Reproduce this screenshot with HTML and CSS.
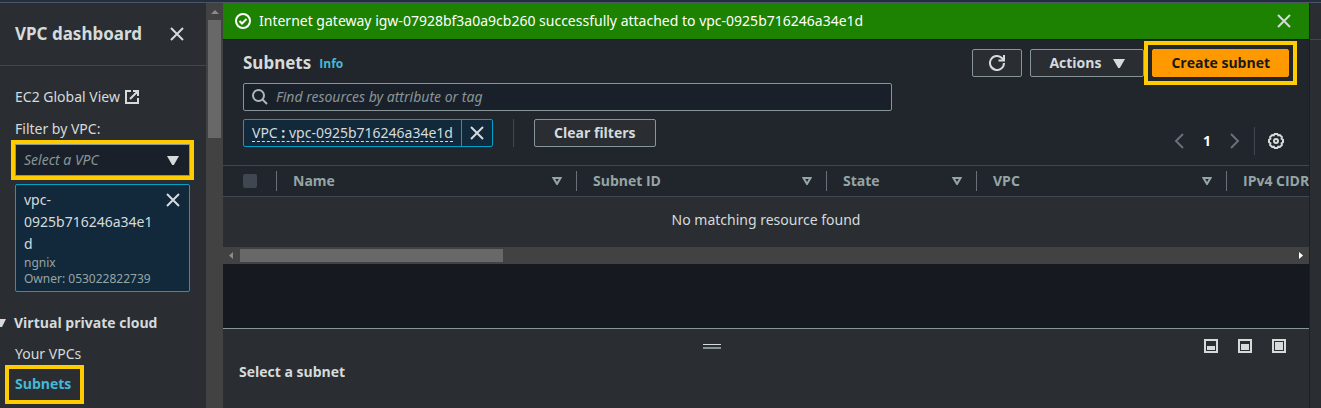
FILE: index.html
```html
<!DOCTYPE html>
<html lang="en">
<head>
<meta charset="utf-8">
<title>Subnets | VPC</title>
<link rel="stylesheet" href="styles.css">
</head>
<body>
<div class="topbar"></div>
<div class="layout">
  <aside class="sidebar">
    <div class="sidebar-body">
      <header class="sidebar-header">
        <h2 class="sidebar-title">VPC dashboard</h2>
        <button class="icon-btn" type="button" aria-label="Close navigation"><svg class="icon" viewBox="0 0 16 16"><path d="M2 2l12 12M14 2L2 14"/></svg></button>
      </header>
      <div class="sidebar-filter">
        <a class="nav-link external" href="#">EC2 Global View
          <svg class="icon" viewBox="0 0 16 16"><path d="M7 2H2v12h12V9M9 2h5v5M14 2L6 10"/></svg></a>
        <label class="filter-label" for="vpc-filter">Filter by VPC:</label>
        <div class="select highlight">
          <select id="vpc-filter" class="select-input"><option>Select a VPC</option></select>
          <svg class="caret" viewBox="0 0 12 10"><path d="M0 1h12L6.800 10h-1.600z"/></svg>
        </div>
        <div class="vpc-token">
          <div class="vpc-token-text">
            <span class="vpc-id">vpc-0925b716246a34e1d</span>
            <span class="vpc-meta">ngnix</span>
            <span class="vpc-meta">Owner: 053022822739</span>
          </div>
          <button class="icon-btn" type="button" aria-label="Remove VPC"><svg class="icon" viewBox="0 0 16 16"><path d="M2 2l12 12M14 2L2 14"/></svg></button>
        </div>
      </div>
      <nav class="nav">
        <button class="nav-group" type="button"><svg class="nav-caret" viewBox="0 0 6 8"><path d="M0 0h6L2 8H0z"/></svg>Virtual private cloud</button>
        <a class="nav-link nav-item" href="#">Your VPCs</a>
        <a class="nav-link nav-item current highlight" href="#" aria-current="page">Subnets</a>
      </nav>
    </div>
    <div class="vscroll">
      <svg class="vscroll-arrow" viewBox="0 0 17 17"><path d="M5 11h8L9 7z"/></svg>
      <div class="vscroll-thumb"></div>
    </div>
  </aside>

  <main class="main">
    <div class="flash" role="status">
      <svg class="flash-icon" viewBox="0 0 16 16"><circle cx="8" cy="8" r="7"/><path d="M4.500 8L7 10.500 11.500 6"/></svg>
      <span class="flash-text">Internet gateway igw-07928bf3a0a9cb260 successfully attached to vpc-0925b716246a34e1d</span>
      <button class="icon-btn" type="button" aria-label="Dismiss"><svg class="icon" viewBox="0 0 16 16"><path d="M2 2l12 12M14 2L2 14"/></svg></button>
    </div>

    <section class="card">
      <div class="card-header">
        <h1 class="card-title">Subnets</h1>
        <a class="info" href="#">Info</a>
        <div class="actions">
          <button class="btn btn-refresh" type="button" aria-label="Refresh"><svg class="refresh" viewBox="0 0 16 16"><path d="M15 8a7 7 0 1 1-2.200-5.100L15 5M15 0v5.500H9.500"/></svg></button>
          <button class="btn btn-menu" type="button">Actions <svg class="caret" viewBox="0 0 12 10"><path d="M0 1h12L6.800 10h-1.600z"/></svg></button>
          <div class="primary-slot"><button class="btn btn-primary" type="button">Create subnet</button></div>
        </div>
      </div>

      <div class="search">
        <svg class="search-icon" viewBox="0 0 16 16"><circle cx="6.500" cy="6.500" r="5.500"/><path d="M10.500 10.500L15 15"/></svg>
        <input class="search-input" type="text" aria-label="Find resources" placeholder="Find resources by attribute or tag">
      </div>

      <div class="filters">
        <div class="token">
          <button class="token-label" type="button"><span class="token-text">VPC <b>:</b> vpc-0925b716246a34e1d</span></button>
          <button class="token-remove" type="button" aria-label="Remove filter"><svg class="icon" viewBox="0 0 16 16"><path d="M2 2l12 12M14 2L2 14"/></svg></button>
        </div>
        <span class="divider"></span>
        <button class="btn" type="button">Clear filters</button>
        <div class="pager">
          <button class="page-btn" type="button" aria-label="Previous page"><svg class="chevron" viewBox="0 0 10 16"><path d="M9 1L2 8l7 7"/></svg></button>
          <button class="page-btn page-current" type="button">1</button>
          <button class="page-btn" type="button" aria-label="Next page"><svg class="chevron" viewBox="0 0 10 16"><path d="M1 1l7 7-7 7"/></svg></button>
          <span class="divider"></span>
          <button class="icon-btn prefs" type="button" aria-label="Preferences"><svg class="gear" viewBox="0 0 16 16"><path d="M6.700 1h2.600l.9 1.300 1.700-.3 2 2-.3 1.700 1.400 1v2.600l-1.400 1 .3 1.700-2 2-1.700-.3-.9 1.300H6.700l-.9-1.300-1.700.3-2-2 .3-1.700-1.400-1V6.700l1.400-1L2.100 4l2-2 1.700.3z"/><circle cx="8" cy="8" r="2"/></svg></button>
        </div>
      </div>

      <div class="table-wrap">
        <table class="table">
          <colgroup><col class="col-check"><col class="col-name"><col class="col-id"><col class="col-state"><col class="col-id"><col></colgroup>
          <thead>
            <tr>
              <th><div class="th check-cell"><input class="check" type="checkbox" aria-label="Select all" disabled></div></th>
              <th><div class="th">Name <svg class="sort" viewBox="0 0 10 8"><path d="M1.500 1h7L5 7z"/></svg></div></th>
              <th><div class="th">Subnet ID <svg class="sort" viewBox="0 0 10 8"><path d="M1.500 1h7L5 7z"/></svg></div></th>
              <th><div class="th">State <svg class="sort" viewBox="0 0 10 8"><path d="M1.500 1h7L5 7z"/></svg></div></th>
              <th><div class="th">VPC <svg class="sort" viewBox="0 0 10 8"><path d="M1.500 1h7L5 7z"/></svg></div></th>
              <th><div class="th th-last">IPv4 CIDR</div></th>
            </tr>
          </thead>
        </table>
      </div>
      <p class="empty">No matching resource found</p>
      <div class="hscroll">
        <svg class="hscroll-arrow" viewBox="0 0 17 17"><path class="arrow-off" d="M10 5v7L6 8.500z"/></svg>
        <div class="hscroll-track"><div class="hscroll-thumb"></div></div>
        <svg class="hscroll-arrow" viewBox="0 0 17 17"><path class="arrow-on" d="M7 5v7l4-3.500z"/></svg>
      </div>
    </section>

    <section class="panel">
      <div class="panel-bar">
        <div class="handle"></div>
        <button class="icon-btn" type="button" aria-label="Small panel"><svg class="size-icon" viewBox="0 0 14 14"><path d="M1 1h12v12H1z"/><path class="fill" d="M3 7h8v4H3z"/></svg></button>
        <button class="icon-btn" type="button" aria-label="Medium panel"><svg class="size-icon" viewBox="0 0 14 14"><path d="M1 1h12v12H1z"/><path class="fill" d="M3 5h8v6H3z"/></svg></button>
        <button class="icon-btn" type="button" aria-label="Full panel"><svg class="size-icon" viewBox="0 0 14 14"><path d="M1 1h12v12H1z"/><path class="fill" d="M3 3h8v8H3z"/></svg></button>
      </div>
      <h2 class="panel-title">Select a subnet</h2>
    </section>
  </main>
  <aside class="rail"></aside>
</div>
</body>
</html>
```
FILE: styles.css
```css
* { box-sizing: border-box; }

body {
  margin: 0;
  height: 100vh;
  display: flex;
  flex-direction: column;
  overflow: hidden;
  background: #16191f;
  color: #d5dbdb;
  font: 14px/22px "Noto Sans", "Open Sans", sans-serif;
}

h1, h2, p { margin: 0; }
button, input, select { font: inherit; color: inherit; }
svg { display: block; flex: none; fill: none; stroke: currentColor; stroke-width: 2; }

.panel-title, .btn, .nav-group, .current, .info, .table th {
  font-family: "Open Sans", "Noto Sans", sans-serif;
  font-weight: 700;
}

.highlight { outline: 4px solid #ffcc00; }

.topbar { flex: none; height: 3px; background: #232f3e; border-bottom: 1px solid #4b5563; }
.layout { flex: 1; min-height: 0; display: flex; }

.icon-btn { padding: 0; border: 0; background: none; display: flex; }
.icon { width: 16px; height: 16px; }
.caret { width: 12px; height: 10px; fill: currentColor; stroke: none; }

/* Side navigation */
.sidebar { flex: none; width: 223px; display: flex; background: #2a2e33; overflow: hidden; }
.sidebar-body { flex: 1; min-width: 0; }
.sidebar-header {
  display: flex;
  align-items: center;
  justify-content: space-between;
  padding: 20px 21px 20px 15px;
  border-bottom: 1px solid #414750;
}
.sidebar-title, .card-title { font-size: 17px; line-height: 22px; font-weight: 700; }
.sidebar-filter { padding: 20px 16px 0 15px; display: flex; flex-direction: column; }
.nav-link { color: inherit; text-decoration: none; }
.external { display: flex; align-items: center; gap: 4px; }
.filter-label { margin: 10px 0 4px; }
.select {
  display: grid;
  align-items: center;
  height: 32px;
  background: #1a2029;
  border: 1px solid #879596;
}
.select-input {
  grid-area: 1 / 1;
  appearance: none;
  width: 100%;
  height: 30px;
  padding: 0 32px 0 8px;
  border: 0;
  background: none;
  color: #879596;
  font-style: italic;
}
.select .caret { grid-area: 1 / 1; justify-self: end; margin-right: 10px; }
.vpc-token {
  display: flex;
  align-items: flex-start;
  margin-top: 8px;
  padding: 4px 8px;
  background: #12293b;
  border: 1px solid #00a1c9;
  border-radius: 2px;
}
.vpc-token .icon-btn { padding-top: 3px; }
.vpc-token-text { flex: 1; min-width: 0; padding-right: 4px; display: flex; flex-direction: column; }
.vpc-id { overflow-wrap: anywhere; }
.vpc-meta { font-size: 12px; line-height: 16px; color: #95a5a6; white-space: nowrap; }
.nav { display: flex; flex-direction: column; align-items: flex-start; padding-top: 20px; }
.nav-group {
  display: flex;
  align-items: center;
  gap: 8px;
  padding: 0;
  border: 0;
  background: none;
}
.nav-caret { width: 6px; height: 8px; fill: currentColor; stroke: none; }
.nav-item { margin: 9px 0 0 9px; padding: 0 6px; }
.current { margin-top: 4px; padding: 4px 9px 5px 6px; color: #44b9d6; }

.vscroll { width: 17px; background: #424242; display: flex; flex-direction: column; align-items: center; }
.vscroll-arrow { width: 17px; height: 17px; fill: #8a8a8a; stroke: none; }
.vscroll-thumb { width: 13px; height: 118px; background: #686868; }

/* Main column */
.main { flex: 1; min-width: 0; display: flex; flex-direction: column; }
.flash {
  display: flex;
  align-items: center;
  gap: 8px;
  padding: 7px 17px 7px 12px;
  background: #1d8102;
  color: #fff;
}
.flash-icon { width: 16px; height: 16px; }
.flash-text { flex: 1; min-width: 0; }
.flash .icon-btn { color: #d5dbdb; }

.card { background: #21252c; border-top: 1px solid #16191f; }
.card-header { display: flex; align-items: center; padding: 9px 20px 0; }
.info { margin: 2px 0 0 8px; color: #44b9d6; font-size: 12px; line-height: 16px; text-decoration: none; }
.actions { display: flex; gap: 8px; margin-left: auto; }
.btn {
  display: flex;
  align-items: center;
  gap: 12px;
  height: 28px;
  padding: 0 19px;
  background: #2a2e33;
  border: 1px solid #879596;
  border-radius: 2px;
}
.btn-refresh { padding: 0 16px; }
.btn-menu { padding: 0 18px; }
.refresh { width: 16px; height: 16px; }
.primary-slot { outline: 4px solid #ffcc00; outline-offset: 4px; }
.btn-primary { padding: 0 18px; background: #ff9900; border-color: #ff9900; color: #16191f; }

.search {
  display: flex;
  align-items: center;
  gap: 8px;
  width: calc((100% - 40px) * 0.62);
  height: 28px;
  margin: 6px 20px 0;
  padding: 0 8px;
  background: #1a2029;
  border: 1px solid #879596;
  border-radius: 2px;
}
.search-icon { width: 16px; height: 16px; color: #aab7b8; }
.search-input { flex: 1; min-width: 0; padding: 0; border: 0; outline: 0; background: none; }
.search-input::placeholder { color: #879596; opacity: 1; font-style: italic; }

.filters { display: flex; align-items: flex-start; gap: 20px; padding: 8px 25px 0 20px; }
.token { display: flex; height: 28px; background: #12293b; border: 1px solid #00a1c9; border-radius: 2px; }
.token-label { padding: 0 8px; border: 0; border-right: 1px solid #00a1c9; background: none; }
.token-text { display: block; line-height: 17px; border-bottom: 1px dashed #d5dbdb; }
.token-remove { padding: 0 7px; border: 0; background: none; display: flex; align-items: center; }
.divider { width: 1px; height: 28px; background: #414750; }
.pager { display: flex; align-items: center; gap: 9px; margin: 8px 0 10px auto; }
.page-btn { padding: 0 5px; border: 0; background: none; color: #687078; }
.page-current { color: #fff; font-weight: 700; }
.chevron { width: 10px; height: 16px; }
.prefs { margin-left: 4px; }
.gear { width: 16px; height: 16px; }

.table-wrap { overflow: hidden; }
.table {
  table-layout: fixed;
  width: 100%;
  border-collapse: collapse;
  border-top: 1px solid #414750;
  border-bottom: 1px solid #414750;
  color: #95a5a6;
}
.col-check { width: 54px; }
.col-name { width: 300px; }
.col-id { width: 250px; }
.col-state { width: 150px; }
.table th { padding: 5px 0; text-align: left; }
.th {
  display: flex;
  align-items: center;
  justify-content: space-between;
  height: 20px;
  padding: 0 14px 0 16px;
  border-right: 1px solid #687078;
}
.th-last { padding-right: 0; border-right: 0; white-space: nowrap; }
.check-cell { padding: 0 0 0 20px; }
.check { appearance: none; width: 14px; height: 14px; margin: 0; background: #414750; border-radius: 2px; }
.sort { width: 10px; height: 8px; }
.empty { padding: 12px 20px 16px; background: #2a2e33; text-align: center; }

.hscroll { display: flex; align-items: center; height: 17px; background: #424242; }
.hscroll-arrow { width: 17px; height: 17px; stroke: none; }
.arrow-off { fill: #8a8a8a; }
.arrow-on { fill: #fff; }
.hscroll-track { flex: 1; }
.hscroll-thumb { width: 25%; height: 13px; background: #686868; }

/* Split panel */
.panel { margin-top: auto; background: #2a2e33; border-top: 1px solid #879596; padding: 10px 23px 25px 16px; }
.panel-bar { display: flex; gap: 20px; }
.handle {
  width: 18px;
  height: 5px;
  margin: 5px auto 0;
  border-top: 1px solid #d5dbdb;
  border-bottom: 2px solid #879596;
}
.size-icon { width: 14px; height: 14px; }
.size-icon .fill { fill: currentColor; stroke: none; }
.panel-title { margin-top: 8px; font-size: 14px; line-height: 22px; }

.rail { flex: none; width: 12px; background: #2a2e33; border-left: 1px solid #1c2025; }
.rail::before { content: ""; display: block; height: 36px; border-bottom: 1px solid #414750; }
```
